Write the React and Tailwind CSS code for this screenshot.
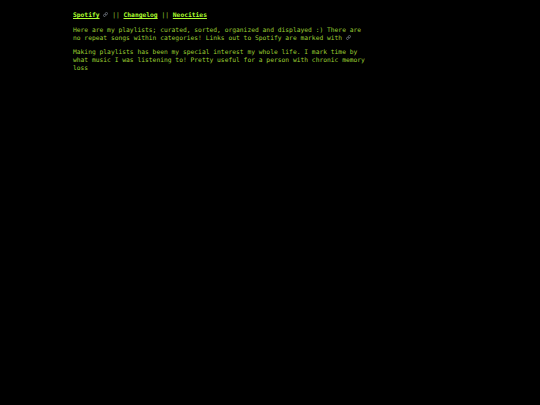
import { Link } from 'lucide-react';

const Chain = () => (
  <Link className="inline-block w-[5px] h-[5px] text-gray-400 align-baseline" strokeWidth={3} />
);

const App = () => {
  return (
    <div className="min-h-[405px] bg-black text-[#9acd32] font-['DejaVu_Sans_Mono',monospace] text-[6.3px] leading-[8px]">
      <div className="ml-[73px] pt-[11px] w-[296px]">
        <p className="mb-[7px]">
          <a href="#" className="text-[#adff2f] font-bold underline">Spotify</a> <Chain /> || <a href="#" className="text-[#adff2f] font-bold underline">Changelog</a> || <a href="#" className="text-[#adff2f] font-bold underline">Neocities</a>
        </p>
        <p className="mb-[6px]">
          Here are my playlists; curated, sorted, organized and displayed :) There are no repeat songs within categories! Links out to Spotify are marked with <Chain />
        </p>
        <p>
          Making playlists has been my special interest my whole life. I mark time by what music I was listening to! Pretty useful for a person with chronic memory loss
        </p>
      </div>
    </div>
  );
};

export default App;
